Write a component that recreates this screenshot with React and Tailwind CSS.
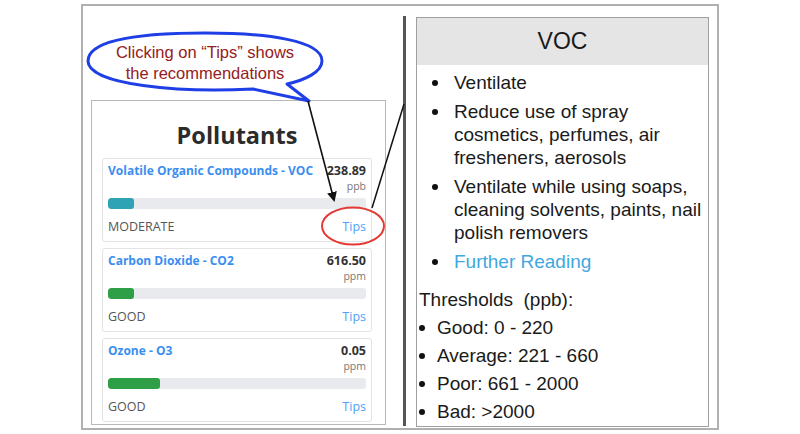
import React from "react";

const cards = [
  { name: "Volatile Organic Compounds - VOC", value: "238.89", unit: "ppb", fill: 26, color: "bg-[#2ea3b5]", status: "MODERATE" },
  { name: "Carbon Dioxide - CO2", value: "616.50", unit: "ppm", fill: 26, color: "bg-[#2e9e47]", status: "GOOD" },
  { name: "Ozone - O3", value: "0.05", unit: "ppm", fill: 52, color: "bg-[#2e9e47]", status: "GOOD" },
];

function Card({ c }) {
  return (
    <div className="h-[84px] rounded-[3px] border border-[#e3e3e3] px-[5px] pt-[4px] font-['Open_Sans',sans-serif]">
      <div className="flex justify-between h-[16px] leading-[16px] text-[12px] font-bold">
        <span className="text-[#3a8ef0]">{c.name}</span>
        <span className="text-[#333] text-[12.5px]">{c.value}</span>
      </div>
      <div className="h-[14px] leading-[14px] text-right text-[10.5px] text-[#777]">{c.unit}</div>
      <div className="mt-[5px] h-[11px] rounded-[3px] bg-[#e8eaed] overflow-hidden">
        <div className={`h-full rounded-[3px] ${c.color}`} style={{ width: c.fill }} />
      </div>
      <div className="mt-[10px] flex justify-between h-[16px] leading-[16px] text-[12.5px]">
        <span className="text-[#555]">{c.status}</span>
        <span className="text-[#4ea3f7]">Tips</span>
      </div>
    </div>
  );
}

function Bullet({ children }) {
  return (
    <div className="flex">
      <span className="w-[28px] shrink-0 pl-[6px] pt-[9px]">
        <span className="block w-[6px] h-[6px] rounded-full bg-[#111]" />
      </span>
      <div>{children}</div>
    </div>
  );
}

export default function App() {
  return (
    <div className="relative w-[800px] h-[434px] bg-white overflow-hidden">
      <div className="ml-[81px] mt-[4px] w-[638px] h-[426px] border-2 border-[#b0b0b0] flex">
        <div className="ml-[8px] mt-[94px] w-[295px] h-[325px] border border-[#b8b8b8] pl-[10px] pr-[13px] flex flex-col">
          <div className="h-[57px] flex items-center justify-center pt-[12px] text-[23.5px] font-bold text-[#2b2b2b] font-['Open_Sans',sans-serif]">
            Pollutants
          </div>
          <div className="flex flex-col gap-[6px]">
            {cards.map((c) => (
              <Card key={c.name} c={c} />
            ))}
          </div>
        </div>
        <div className="ml-[17px] mt-[10px] w-[3px] h-[410px] bg-[#555]" />
        <div className="ml-[10px] mt-[11px] w-[293px] h-[410px] border-[1.5px] border-[#a0a0a0] font-['Liberation_Sans',Arial,sans-serif] text-[#1a1a1a]">
          <div className="h-[47px] bg-[#e5e5e5] flex items-center justify-center text-[23px]">VOC</div>
          <div className="pt-[6px] text-[19px] leading-[23px]">
            <div className="pl-[9px] flex flex-col gap-[6px]">
              <Bullet>Ventilate</Bullet>
              <Bullet>
                Reduce use of spray
                <br />
                cosmetics, perfumes, air
                <br />
                fresheners, aerosols
              </Bullet>
              <Bullet>
                Ventilate while using soaps,
                <br />
                cleaning solvents, paints, nail
                <br />
                polish removers
              </Bullet>
              <Bullet>
                <span className="text-[#3fa8e0]">Further Reading</span>
              </Bullet>
            </div>
            <div className="mt-[13px] pl-[2px] leading-[28px]">
              <div>Thresholds&nbsp; (ppb):</div>
              {["Good: 0 - 220", "Average: 221 - 660", "Poor: 661 - 2000", "Bad: >2000"].map((t) => (
                <div key={t} className="flex items-center">
                  <span className="w-[6px] h-[6px] rounded-full bg-[#111] mr-[12px]" />
                  <span>{t}</span>
                </div>
              ))}
            </div>
          </div>
        </div>
      </div>

      <svg className="absolute left-0 top-0 pointer-events-none" width="800" height="434" viewBox="0 0 800 434">
        <defs>
          <marker id="ah" markerWidth="10" markerHeight="10" refX="8" refY="5" orient="auto" markerUnits="userSpaceOnUse">
            <path d="M0,0 L10,5 L0,10 z" fill="#111" />
          </marker>
        </defs>
        <path
          d="M 253 89 C 180 93 88 85 88 61 C 88 38 150 33 205 33 C 265 33 322 40 322 61 C 322 72 305 80 287 84 L 309 101 Z"
          fill="white"
          stroke="#1f3fe6"
          strokeWidth="3"
          strokeLinejoin="round"
        />
        <text x="205" y="58" textAnchor="middle" fontFamily="Liberation Sans, Arial, sans-serif" fontSize="16.5" fill="#952020">
          Clicking on “Tips” shows
        </text>
        <text x="205" y="79" textAnchor="middle" fontFamily="Liberation Sans, Arial, sans-serif" fontSize="16.5" fill="#952020">
          the recommendations
        </text>
        <line x1="308" y1="101" x2="334" y2="200" stroke="#111" strokeWidth="1.6" markerEnd="url(#ah)" />
        <ellipse cx="353" cy="226" rx="31" ry="18.5" fill="none" stroke="#e53935" strokeWidth="2" />
        <line x1="372" y1="208" x2="404" y2="104" stroke="#111" strokeWidth="1.5" />
      </svg>
    </div>
  );
}
